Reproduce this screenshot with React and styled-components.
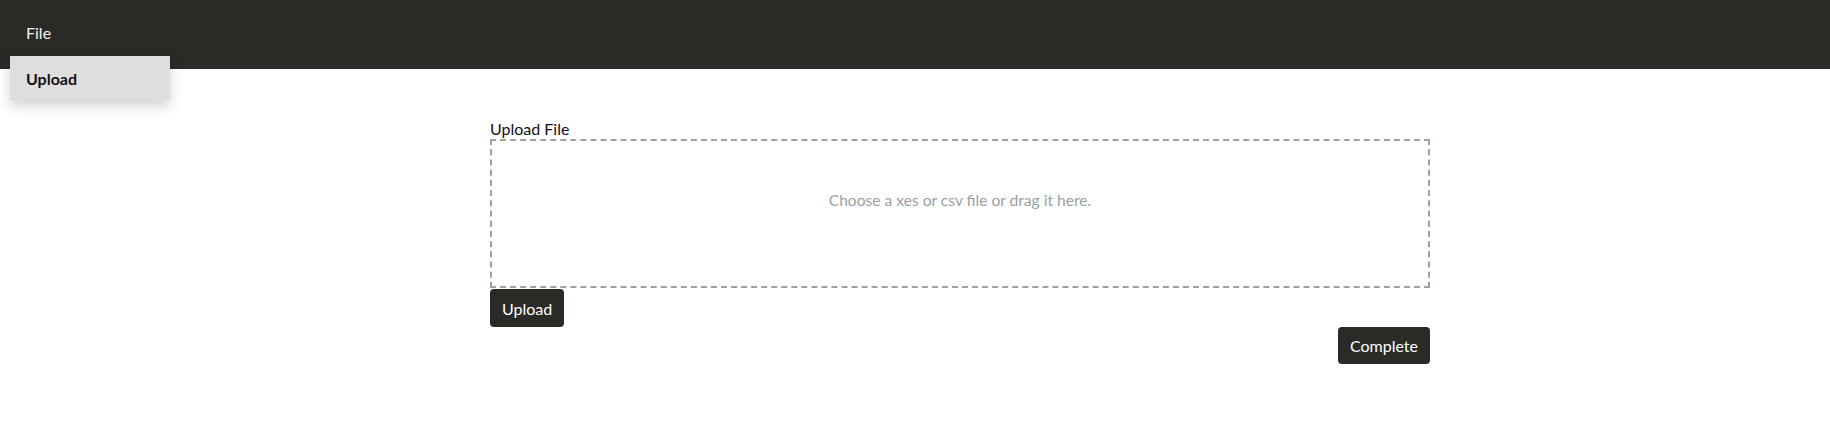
import styled, { createGlobalStyle } from "styled-components";

const GlobalStyle = createGlobalStyle`
  body {
    margin: 0;
    background: #fff;
    font-family: Lato, "Open Sans", sans-serif;
    color: #111;
  }
`;

const Header = styled.header`
  position: relative;
  height: 69px;
  background: #2a2b26;
  display: flex;
  align-items: flex-start;
`;

const Menu = styled.div`
  position: relative;
  margin-left: 10px;
`;

const MenuTitle = styled.div`
  color: #f4f4f4;
  font-size: 16px;
  padding: 23px 0 0 16px;
  height: 33px;
`;

const Dropdown = styled.div`
  position: absolute;
  top: 56px;
  left: 0;
  width: 160px;
  height: 44px;
  background: #dedede;
  box-shadow: 0 6px 12px rgba(0, 0, 0, 0.18);
  display: flex;
  align-items: center;
  z-index: 2;
`;

const DropdownItem = styled.div`
  font-weight: 700;
  font-size: 16px;
  color: #111;
  padding-left: 16px;
`;

const Content = styled.main`
  width: 940px;
  margin-left: 490px;
  padding-top: 50px;
  display: flex;
  flex-direction: column;
`;

const Label = styled.label`
  font-size: 16px;
  line-height: 20px;
  color: #111;
`;

const DropZone = styled.div`
  border: 2px dashed #9aa3a3;
  display: flex;
  justify-content: center;
  padding-top: 49px;
  box-sizing: border-box;
  height: 149px;
`;

const Hint = styled.span`
  color: #98a2a0;
  font-size: 15.6px;
  line-height: 20px;
`;

const Button = styled.button`
  align-self: ${(p) => (p.$right ? "flex-end" : "flex-start")};
  margin-top: ${(p) => (p.$right ? "0" : "1px")};
  background: #2a2b26;
  color: #fff;
  border: none;
  border-radius: 4px;
  font-family: Lato, "Open Sans", sans-serif;
  font-size: 16px;
  height: ${(p) => (p.$right ? "37px" : "38px")};
  padding: 0 12px;
  cursor: pointer;
`;

export default function App() {
  return (
    <>
      <GlobalStyle />
      <Header>
        <Menu>
          <MenuTitle>File</MenuTitle>
          <Dropdown>
            <DropdownItem>Upload</DropdownItem>
          </Dropdown>
        </Menu>
      </Header>
      <Content>
        <Label>Upload File</Label>
        <DropZone>
          <Hint>Choose a xes or csv file or drag it here.</Hint>
        </DropZone>
        <Button>Upload</Button>
        <Button $right>Complete</Button>
      </Content>
    </>
  );
}
